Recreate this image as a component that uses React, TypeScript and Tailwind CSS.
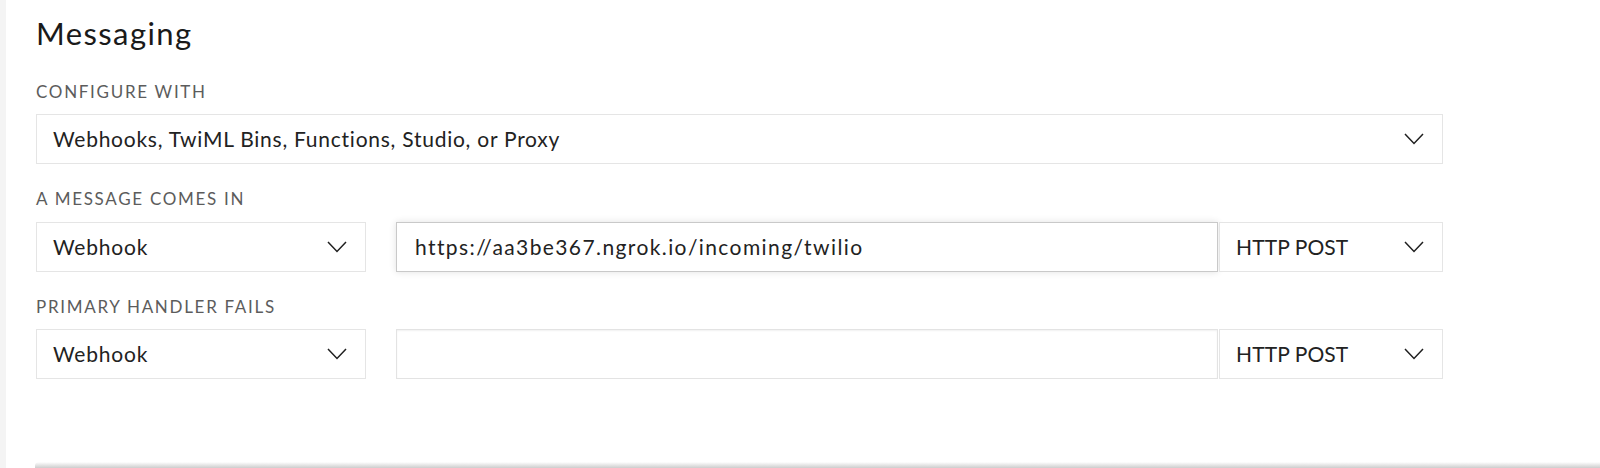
import React from "react";

const Chevron = () => (
  <svg width="20" height="12" viewBox="0 0 20 12" fill="none" className="shrink-0">
    <polyline points="1,1 10,10.5 19,1" stroke="#1f1f1f" strokeWidth="1.5" fill="none" />
  </svg>
);

const Select = ({ value, className }: { value: string; className: string }) => (
  <div
    className={`flex h-[50px] items-center justify-between border border-[#e5e5e5] bg-white pl-[16px] pr-[18px] text-[21px] text-[#222222] ${className}`}
  >
    <span>{value}</span>
    <Chevron />
  </div>
);

const Label = ({ children, className }: { children: React.ReactNode; className: string }) => (
  <div className={`text-[17px] leading-[20px] tracking-[1.7px] text-[#5c5c5c] ${className}`}>{children}</div>
);

export default function App() {
  return (
    <div
      className="flex h-[468px] w-[1600px] overflow-hidden bg-white"
      style={{ fontFamily: "Lato, 'Noto Sans', sans-serif" }}
    >
      <div className="w-[6px] shrink-0 bg-[#f4f4f4]" />
      <div className="flex flex-1 flex-col">
        <div className="flex flex-col pl-[30px]">
          <h1 className="mt-[15px] text-[31px] leading-[36px] tracking-[1.4px] text-[#1a1a1a]">Messaging</h1>
          <div className="w-[1407px]">
            <Label className="mt-[31px]">CONFIGURE WITH</Label>
            <Select
              value="Webhooks, TwiML Bins, Functions, Studio, or Proxy"
              className="mt-[12px] w-full tracking-[0.75px]"
            />
            <Label className="mt-[25px]">A MESSAGE COMES IN</Label>
            <div className="mt-[13px] flex">
              <Select value="Webhook" className="w-[330px] shrink-0 tracking-[0.8px]" />
              <div className="ml-[30px] flex h-[50px] w-[822px] shrink-0 items-center border border-[#c9c9c9] bg-white pl-[18px] text-[21px] tracking-[1.4px] text-[#222222] shadow-[0_0_7px_rgba(0,0,0,0.12)]">
                https://aa3be367.ngrok.io/incoming/twilio
              </div>
              <Select value="HTTP POST" className="ml-[1px] w-[224px] shrink-0 tracking-[0.1px]" />
            </div>
            <Label className="mt-[25px]">PRIMARY HANDLER FAILS</Label>
            <div className="mt-[12px] flex">
              <Select value="Webhook" className="w-[330px] shrink-0 tracking-[0.8px]" />
              <div className="ml-[30px] h-[50px] w-[822px] shrink-0 border border-[#e3e3e3] bg-white shadow-[inset_0_1px_2px_rgba(0,0,0,0.06)]" />
              <Select value="HTTP POST" className="ml-[1px] w-[224px] shrink-0 tracking-[0.1px]" />
            </div>
          </div>
        </div>
        <div className="mt-auto ml-[29px] h-[6px] rounded-tl-[4px] bg-linear-to-b from-white to-[#cdcdcd]" />
      </div>
    </div>
  );
}
